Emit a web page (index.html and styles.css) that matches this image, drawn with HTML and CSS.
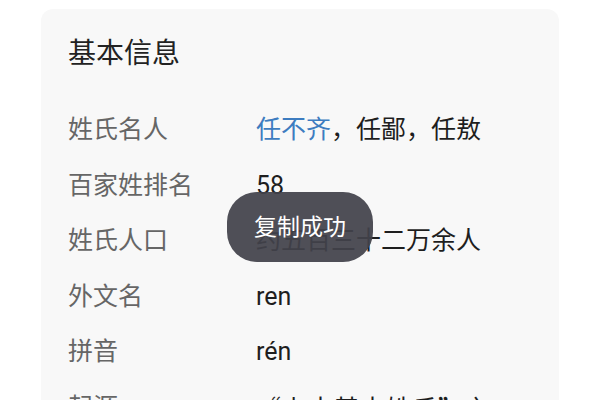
FILE: index.html
```html
<!DOCTYPE html>
<html lang="zh">
<head>
<meta charset="utf-8">
<link rel="stylesheet" href="styles.css">
</head>
<body>
<div class="card">
  <div class="title">基本信息</div>
  <div class="rows">
    <div class="row"><span class="label">姓氏名人</span><span class="value"><span class="link">任不齐</span>，任鄙，任敖</span></div>
    <div class="row"><span class="label">百家姓排名</span><span class="value">58</span></div>
    <div class="row"><span class="label">姓氏人口</span><span class="value">约五百三十二万余人</span></div>
    <div class="row"><span class="label">外文名</span><span class="value">ren</span></div>
    <div class="row"><span class="label">拼音</span><span class="value">rén</span></div>
    <div class="row"><span class="label">起源</span><span class="value cjk">“上古基本姓氏”之一</span></div>
  </div>
</div>
<div class="toast">复制成功</div>
</body>
</html>
```

FILE: styles.css
```css
html, body {
  margin: 0;
  padding: 0;
  background: #ffffff;
  height: 400px;
  overflow: hidden;
}
body {
  font-family: Roboto, "Noto Sans CJK SC", sans-serif;
  position: relative;
}
.card {
  margin: 9px 41px 0 41px;
  background: #f8f8f8;
  border-radius: 12px;
  padding: 25px 27px 0 27px;
  height: 440px;
  box-sizing: border-box;
}
.title {
  font-size: 28px;
  line-height: 40px;
  color: #222;
}
.rows {
  margin-top: 28px;
}
.row {
  display: flex;
  height: 55.5px;
  line-height: 55.5px;
  font-size: 25px;
}
.label {
  width: 188px;
  flex: none;
  color: #666666;
}
.value {
  color: #1e1e1e;
}
.cjk {
  font-family: "Noto Sans CJK SC", sans-serif;
  letter-spacing: 1px;
}
.link {
  color: #3d7cc0;
}
.toast {
  position: absolute;
  left: 227px;
  top: 192px;
  width: 146px;
  height: 70px;
  border-radius: 30px;
  background: rgba(66, 66, 74, 0.93);
  color: #fff;
  font-size: 23px;
  display: flex;
  align-items: center;
  justify-content: center;
  padding-bottom: 4px;
  box-sizing: border-box;
}
```
